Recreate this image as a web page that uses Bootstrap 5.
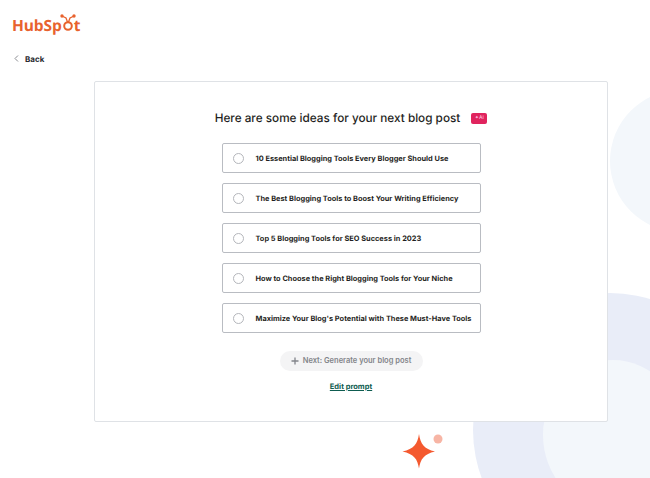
<!DOCTYPE html>
<html lang="en">
<head>
  <meta charset="UTF-8">
  <meta name="viewport" content="width=device-width, initial-scale=1">
  <title>HubSpot blog ideas</title>
  <link href="https://cdn.jsdelivr.net/npm/bootstrap@5.3.3/dist/css/bootstrap.min.css" rel="stylesheet">
  <style>
    html, body { height: 100%; }
    body { font-family: Inter, "Open Sans", sans-serif; background: #fff; color: #1f1f23; overflow: hidden; position: relative; text-rendering: geometricPrecision; }
    .backdrop { position: absolute; left: 0; top: 0; }
    .sheet { position: relative; }
    .brand { padding: 2px 0 0 12px; height: 48px; }
    .brand-name { font-family: "Open Sans", sans-serif; font-weight: 700; font-size: 15.5px; line-height: 24px; height: 24px; color: #e8622e; letter-spacing: -.1px; }
    .brand-gear { margin: -4px -2px 0 -2px; flex: none; }
    .back-link { margin: 0 0 0 14px; height: 21px; font-size: 8px; font-weight: 700; color: #2a2a30; text-decoration: none; gap: 6px; }
    .idea-panel { width: 514px; height: 341px; margin: 12px 0 0 94px; background: #fff; border: 1px solid #dfe2e6; border-radius: 2px; padding-top: 28px; }
    .idea-title { font-size: 11.75px; font-weight: 500; line-height: 16px; gap: 11px; margin: 0 0 17px; color: #1f1f23; }
    .ai-tag { width: 16px; height: 11px; border-radius: 2px; background: #e0245e; color: #fbd; font-size: 5px; line-height: 11px; text-align: center; }
    .idea-list { width: 259px; margin: 0 auto; gap: 10px; }
    .idea-row { height: 30px; border: 1px solid #b9bcc2; border-radius: 2px; padding: 1px 0 0 10px; font-size: 7.4px; font-weight: 700; color: #1f1f23; gap: 12px; background: #fff; white-space: nowrap; }
    .idea-radio { width: 11px; height: 11px; border: 1px solid #b4b6bb; border-radius: 50%; flex: none; margin-top: -1px; }
    .next-btn { height: 20px; width: 143px; margin: 18px auto 0; border-radius: 10px; border: 0; padding: 0; background: #f4f4f5; color: #83858a; font-size: 7.5px; font-weight: 600; gap: 4px; }
    .edit-link { margin-top: 4px; font-size: 7.5px; font-weight: 700; color: #0e5c50; }
    .star-mark { position: absolute; left: 400px; top: 432px; }
  </style>
</head>
<body>
  <svg class="backdrop" width="650" height="478" viewBox="0 0 650 478">
    <circle cx="681" cy="161" r="71" fill="#f3f7fb"/>
    <circle cx="610" cy="430" r="137" fill="#e9edf8"/>
    <ellipse cx="613" cy="435" rx="70" ry="75" fill="#f3f7fb"/>
  </svg>

  <div class="sheet">
    <div class="brand d-flex align-items-center">
      <span class="brand-name d-flex align-items-center">HubSp<svg class="brand-gear" width="16" height="18" viewBox="0 0 16 18" fill="none" stroke="#e8622e"><circle cx="8" cy="12" r="3.800" stroke-width="2"/><path d="M7.500 8 6 4 2 2M8.500 8 10 4l4-2" stroke-width="1.300"/><circle cx="2" cy="2" r="1.700" fill="#e8622e" stroke="none"/><circle cx="14" cy="2" r="1.700" fill="#e8622e" stroke="none"/></svg>t</span>
    </div>
    <a href="#" class="back-link d-flex align-items-center">
      <svg width="5" height="7" viewBox="0 0 5 7" fill="none" stroke="#8a8c91" stroke-width="1"><path d="M4 .5 1 3.500l3 3"/></svg>
      <span>Back</span>
    </a>

    <section class="idea-panel">
      <h1 class="idea-title d-flex justify-content-center align-items-center">
        <span>Here are some ideas for your next blog post</span>
        <span class="ai-tag">✦AI</span>
      </h1>
      <div class="idea-list d-flex flex-column">
        <div class="idea-row d-flex align-items-center"><span class="idea-radio"></span>10 Essential Blogging Tools Every Blogger Should Use</div>
        <div class="idea-row d-flex align-items-center"><span class="idea-radio"></span>The Best Blogging Tools to Boost Your Writing Efficiency</div>
        <div class="idea-row d-flex align-items-center"><span class="idea-radio"></span>Top 5 Blogging Tools for SEO Success in 2023</div>
        <div class="idea-row d-flex align-items-center"><span class="idea-radio"></span>How to Choose the Right Blogging Tools for Your Niche</div>
        <div class="idea-row d-flex align-items-center"><span class="idea-radio"></span>Maximize Your Blog's Potential with These Must-Have Tools</div>
      </div>
      <button type="button" class="next-btn d-flex align-items-center justify-content-center">
        <svg width="8" height="8" viewBox="0 0 8 8" stroke="#83858a" stroke-width="1.300"><path d="M4 .5v7M.5 4h7"/></svg>
        <span>Next: Generate your blog post</span>
      </button>
      <div class="text-center"><a href="#" class="edit-link d-inline-block">Edit prompt</a></div>
    </section>
  </div>

  <svg class="star-mark" width="46" height="38" viewBox="0 0 46 38">
    <path d="M19 2C20.500 12 24 17 35 19.500 24 22 20.500 27 19 36.500 17.500 27 14 22 2.500 19.500 14 17 17.500 12 19 2Z" fill="#f4592f"/>
    <circle cx="38" cy="7" r="4.500" fill="#f7b5a5"/>
  </svg>
</body>
</html>
